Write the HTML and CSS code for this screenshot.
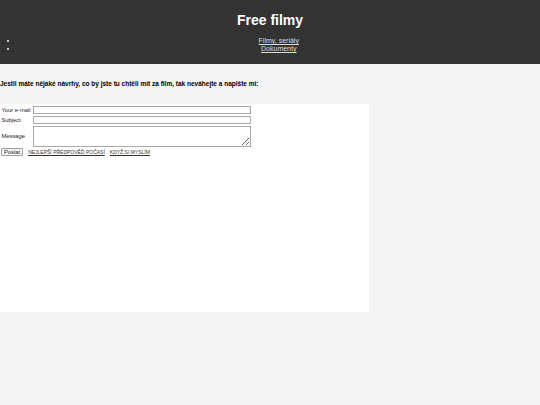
FILE: index.html
```html
<!DOCTYPE html>
<html lang="cs">
<head>
<meta charset="utf-8">
<title>Free filmy</title>
<link rel="stylesheet" href="styles.css">
</head>
<body>
<header class="site-header">
  <h1 class="site-title">Free filmy</h1>
  <ul class="nav">
    <li><a href="#">Filmy, seriály</a></li>
    <li><a href="#">Dokumenty</a></li>
  </ul>
</header>
<main class="content">
  <p class="intro">Jestli máte nějaké návrhy, co by jste tu chtěli mít za film, tak neváhejte a napište mi:</p>
  <section class="panel">
    <form class="contact">
      <table class="form-table">
        <tr>
          <td class="label">Your e-mail</td>
          <td><input class="field" type="text"></td>
        </tr>
        <tr>
          <td class="label">Subject</td>
          <td><input class="field" type="text"></td>
        </tr>
        <tr>
          <td class="label">Message</td>
          <td><textarea class="field area"></textarea></td>
        </tr>
      </table>
      <div class="actions">
        <button class="send" type="button">Poslat</button>
        <a class="extra" href="#">NEJLEPŠÍ PŘEDPOVĚĎ POČASÍ</a>
        <a class="extra" href="#">KDYŽ SI MYSLÍM</a>
      </div>
    </form>
  </section>
</main>
</body>
</html>
```
FILE: styles.css
```css
html, body {
  margin: 0;
  padding: 0;
}
body {
  background: #f4f4f4;
  font-family: "Liberation Sans", Arial, sans-serif;
  font-size: 7px;
  color: #000;
}
.site-header {
  background: #333333;
  color: #fff;
  padding: 2.6px 0 3.6px;
}
.site-title {
  font-size: 14px;
  font-weight: bold;
  text-align: center;
  margin: 9.4px 0;
}
.nav {
  margin: 7px 0;
  padding-left: 17.5px;
  text-align: center;
}
.nav li {
  line-height: 8px;
}
.nav a {
  color: #dddddd;
  text-decoration: underline;
}
.intro {
  font-weight: bold;
  font-size: 6.5px;
  margin: 0;
  padding: 16px 0;
  line-height: 8px;
}
.panel {
  background: #fff;
  width: 369px;
  height: 208px;
  box-sizing: border-box;
  padding-top: 0.5px;
}
.form-table {
  border-spacing: 1px;
  font-size: 5.8px;
  color: #222;
}
.form-table td {
  padding: 0.5px;
  vertical-align: middle;
}
.label {
  padding-left: 2px;
  padding-right: 2px;
}
.field {
  display: block;
  width: 218px;
  height: 8px;
  box-sizing: border-box;
  border: 1px solid #a9a9a9;
  margin: 0;
  padding: 0;
  font-size: 5.8px;
  background: #fff;
}
.area {
  height: 21px;
  resize: vertical;
}
.actions {
  display: flex;
  align-items: center;
  gap: 5px;
  padding-left: 1px;
  margin-top: 0;
}
.send {
  font-family: "Liberation Sans", Arial, sans-serif;
  font-size: 5.8px;
  height: 8px;
  padding: 0 2px;
  line-height: 6px;
  background: #f6f6f6;
  border: 1px solid #a0a0a0;
  border-radius: 1px;
  color: #222;
}
.extra {
  font-size: 5px;
  color: #333;
  text-decoration: underline;
}
```
